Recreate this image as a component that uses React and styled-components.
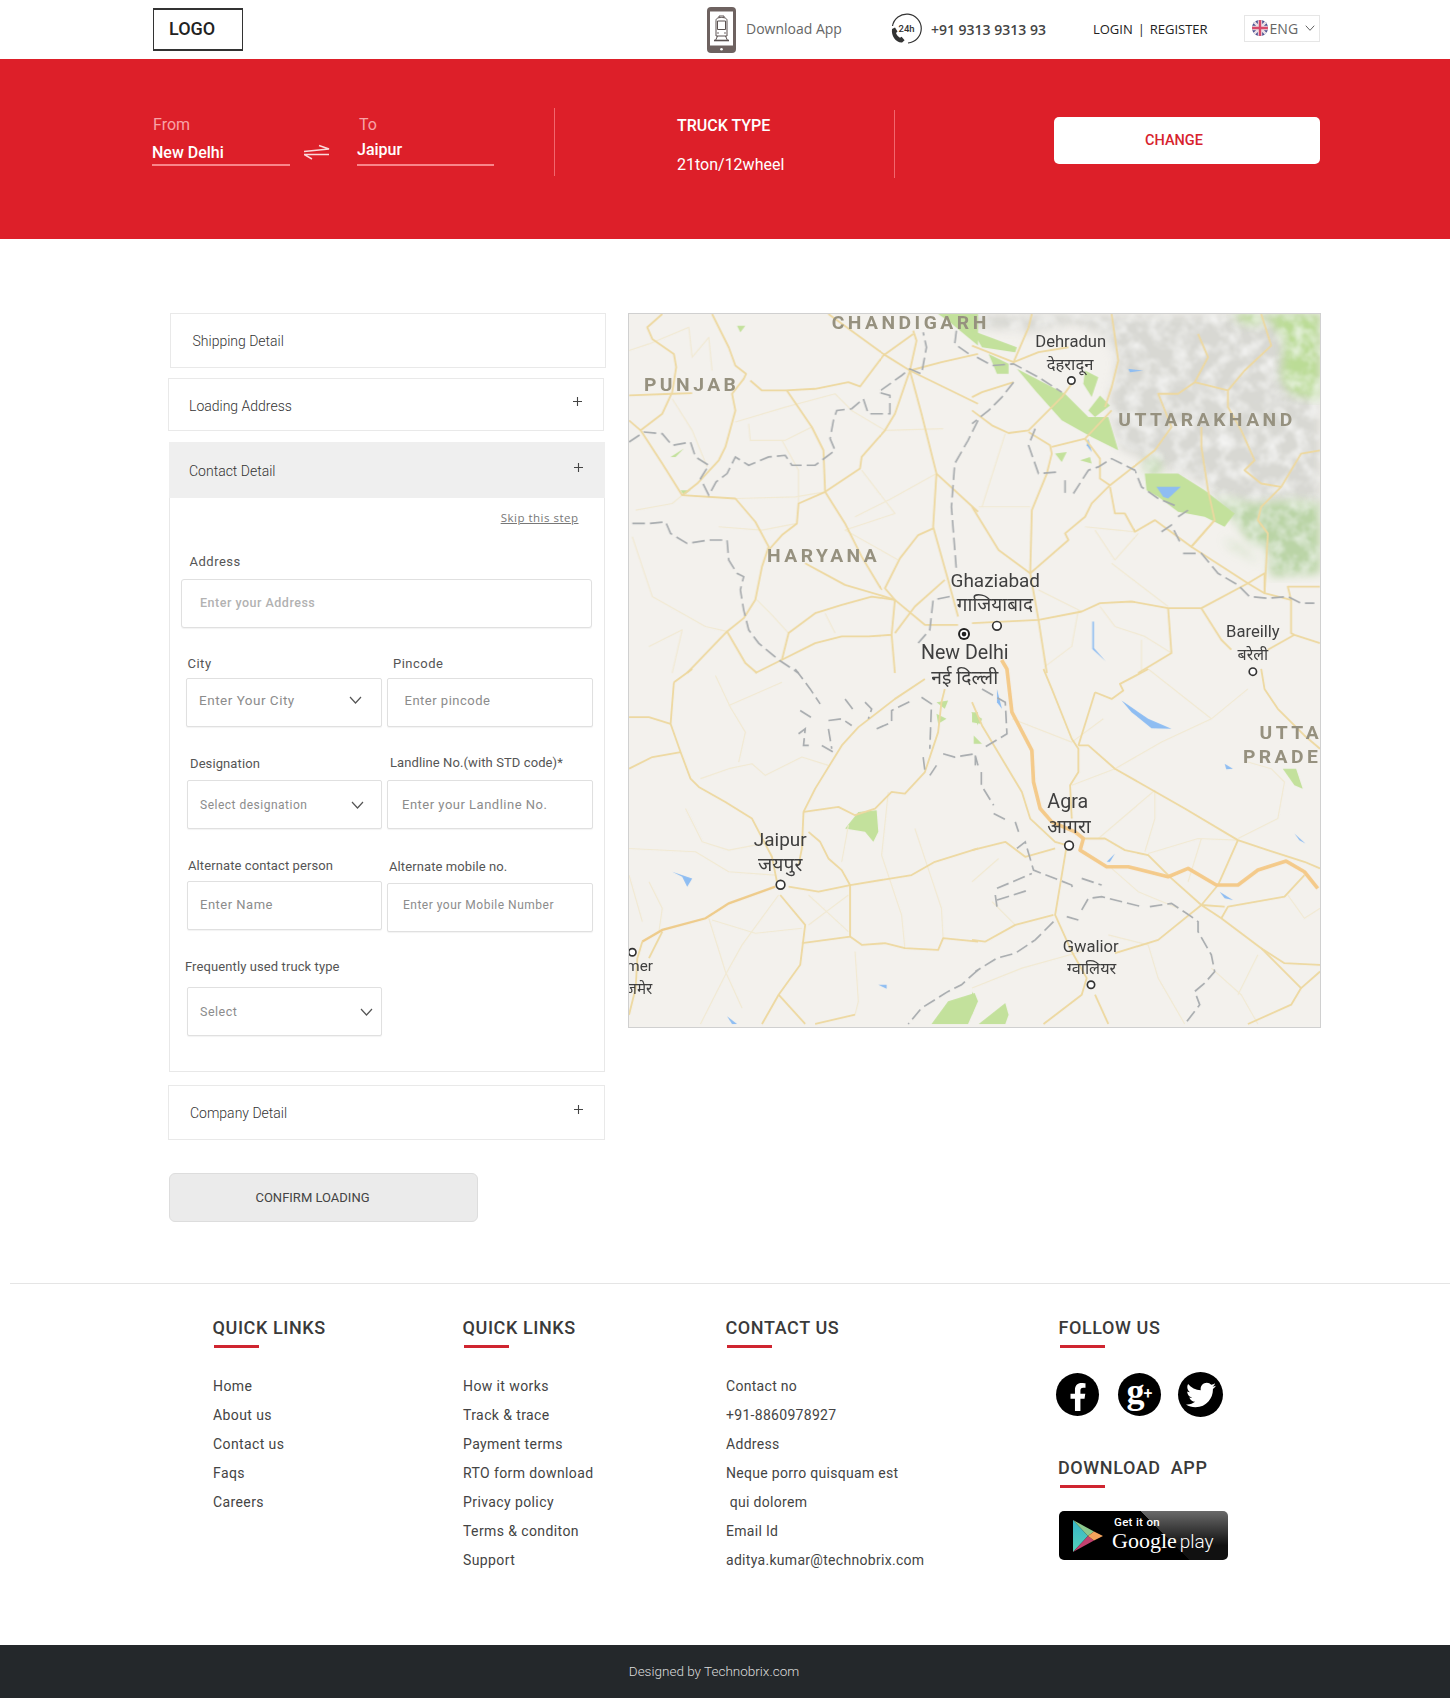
import { createGlobalStyle, styled } from "styled-components";
import { FaFacebookF, FaTwitter } from "react-icons/fa";

const GlobalStyle = createGlobalStyle`
  html, body {
    margin: 0;
    padding: 0;
    background: #fff;
    font-family: Roboto, "Liberation Sans", sans-serif;
    color: #444;
  }
  * { box-sizing: border-box; }
`;

/* map data is traced per quadrant, in 3x crop coordinates */
const quadrants = {
  nw: {
    at: [0, 0],
    main: [
      "M0 245 L130 240 L190 238",
      "M100 0 L55 40 L70 75 L135 120 L142 160 L130 235 L100 300 L35 350 L0 320",
      "M250 0 L300 100 L320 155 L352 180 L345 195 L310 240 L320 290 L290 400 L270 440 L205 510 L160 545",
      "M35 350 L100 450 L160 545 L320 555 L380 625 L420 700 L400 760 L380 860 L345 915 L295 955 L175 1080",
      "M365 200 L400 230 L470 230 L560 225 L660 205 L695 218 L765 125 L855 60",
      "M600 0 L765 120 L845 170 L1050 270",
      "M855 50 L865 80 L845 170 L800 300 L770 350 L700 430 L695 465 L590 535 L510 570 L505 630 L460 665 L420 710",
      "M475 230 L550 340 L585 410 L590 535 L650 630 L700 730 L760 830",
      "M845 170 L880 300 L925 480 L915 640 L960 800 L990 910",
      "M925 480 L1050 595",
      "M915 645 L870 665 L815 735 L770 825 L800 860 L730 850 L640 875 L560 900 L480 960 L460 1040 L380 1080",
      "M530 750 L650 815 L770 850 L800 860 L890 935 L990 935",
      "M460 1040 L560 990 L640 970 L720 970 L790 965 L800 860",
      "M790 965 L800 1080",
      "M800 960 L860 880 L950 800",
      "M295 955 L350 1050 L385 1080",
      "M845 170 L940 145 L1050 120",
    ],
    minor: [
      "M0 110 L60 90 L180 40 L190 130 L240 70 L250 170",
      "M320 325 L470 280 L620 240 L670 290 L770 350 L945 345",
      "M360 330 L365 380 L470 380 L550 340",
      "M460 380 L510 470 L510 570",
      "M130 255 L190 350 L235 460",
      "M20 590 L130 570 L160 545",
      "M320 555 L500 550 L590 535",
      "M270 640 L400 650 L505 630",
      "M680 610 L780 560 L925 480",
      "M700 470 L800 600 L650 650 L810 740",
      "M10 670 L70 850 L230 940 L295 955",
      "M385 860 L430 905 L480 960",
      "M590 900 L620 960",
      "M60 1000 L160 950 L130 1080",
    ],
    border: [
      "M0 385 L45 355 L100 360 L130 395 L185 385 L200 430 L240 455 L215 495 L240 545 L262 505 L295 480 L320 430 L360 455 L420 430 L470 425 L490 455 L560 455 L620 410 L605 375 L615 320 L625 290 L670 285 L705 255 L720 300 L785 300 L785 245 L750 235 L820 185 L845 165 L880 180 L895 100 L885 55",
      "M10 630 L60 630 L110 625 L125 660 L175 690 L240 680 L295 680 L300 740 L325 780 L345 790 L335 830 L345 890 L360 950 L390 990 L450 1040 L510 1080",
      "M1050 320 L1020 380 L980 450 L970 580 L985 770",
      "M985 50 L980 90 L1030 125",
      "M965 850 L915 860 L905 950 L870 990",
    ],
    green: [
      "M325 35 L350 35 L335 55Z",
      "M125 430 L165 405 L140 430Z",
      "M155 530 L185 530 L165 545Z",
      "M930 0 L1050 0 L1050 95 L1020 70 L960 20Z",
    ],
    water: [],
  },
  ne: {
    at: [1032, 0],
    main: [
      "M0 95 L125 145 L170 40 L180 0",
      "M0 290 L60 335 L110 358 L170 350 L270 250 L300 210",
      "M125 145 L200 115 L290 100",
      "M0 250 L30 235 L125 205",
      "M170 355 L235 395 L240 420 L225 480 L180 590 L175 780 L200 920 L225 1080",
      "M240 400 L340 375 L420 290",
      "M340 375 L385 435 L385 495 L415 515 L360 570 L340 610 L280 660 L290 680 L175 780 L80 710 L0 580",
      "M415 520 L430 600 L460 600 L490 655 L550 620 L660 700 L730 620 L710 530 L690 400 L690 340",
      "M415 515 L550 410 L600 340 L560 240 L620 240 L670 205 L710 130 L680 60",
      "M670 205 L770 230 L770 280 L810 350 L850 440 L820 470 L870 510 L930 520 L960 470 L990 420 L1047 410",
      "M770 230 L820 170 L900 95 L870 0",
      "M730 620 L660 700 L830 810 L880 840 L890 660 L860 620 L870 580 L930 520",
      "M830 810 L880 780 L880 840 L960 860 L950 820 L1047 820",
      "M0 930 L200 920 L330 895 L385 870 L480 865 L590 885 L690 885 L830 810",
      "M960 860 L960 960 L970 965 L1047 990",
      "M690 885 L750 980 L780 1010",
      "M970 965 L890 1010",
      "M590 885 L600 1020 L500 1080",
      "M420 0 L440 140 L420 220 L400 280",
    ],
    minor: [
      "M340 640 L440 650 L490 655",
      "M370 650 L430 740 L500 660",
      "M420 750 L590 880",
      "M200 830 L330 895",
      "M385 880 L430 940 L520 970 L600 1020",
      "M20 580 L175 580",
      "M100 360 L30 580",
      "M320 890 L300 1000 L220 1060",
      "M510 980 L510 1080",
    ],
    border: [
      "M15 130 L60 155 L125 150 L200 190 L270 235",
      "M125 205 L90 250 L50 290 L0 330",
      "M190 345 L170 395 L200 480 L260 475",
      "M280 500 L280 545",
      "M305 540 L350 470 L380 460 L420 435 L490 470 L510 520 L560 555 L620 580",
      "M620 610 L650 590",
      "M570 655 L600 635 L630 695",
      "M635 720 L690 720 L740 780 L800 815 L835 850 L890 855 L950 850 L990 870 L1030 870",
    ],
    green: [
      "M135 165 L280 240 L350 310 L410 310 L440 410 L360 370 L270 320 L190 230Z",
      "M0 50 L135 100 L130 115 L30 100Z",
      "M50 120 L110 150 L110 180 L75 180Z",
      "M340 170 L380 190 L360 250 L335 210Z",
      "M350 290 L385 245 L415 275 L370 310Z",
      "M520 480 L620 480 L700 530 L790 600 L760 640 L700 610 L620 595 L560 550 L525 530Z",
      "M250 420 L285 415 L270 445Z",
      "M325 440 L355 430 L360 450Z",
    ],
    meadow: [
      "M880 0 L1047 0 L1047 260 L960 240 L930 190 L940 80Z",
      "M780 0 L870 0 L870 30 L820 30Z",
    ],
    forest: [
      "M730 550 L850 570 L960 560 L1047 570 L1047 780 L900 790 L890 700 L840 690 L790 620Z",
      "M760 675 L860 740 L860 745 L780 700Z",
      "M520 440 L560 430 L570 480 L520 480Z",
    ],
    terrain: [
      "M150 0 L1047 0 L1047 570 L960 560 L850 570 L730 550 L700 510 L620 480 L520 440 L440 400 L420 300 L415 250 L440 140 L400 60 L300 30 L150 60Z",
      "M0 0 L150 0 L130 50 L0 40Z",
    ],
    water: [
      "M470 165 L515 170 L475 175Z",
      "M350 375 L360 415 L345 395Z",
      "M555 520 L628 520 L590 555 L575 550Z",
      "M362 925 L367 925 L367 1005 L402 1045 L362 1008Z",
    ],
  },
  sw: {
    at: [0, 1068],
    main: [
      "M135 40 L125 165 L155 250 L185 330 L210 355 L290 400 L370 450 L430 565 L445 640",
      "M0 145 L60 145 L125 165",
      "M0 300 L70 265 L155 250",
      "M135 40 L190 0",
      "M890 30 L800 90 L690 175 L640 230 L560 360 L525 430 L520 540 L510 590",
      "M40 820 L25 870 L20 960 L0 1040",
      "M100 790 L60 870",
      "M525 430 L630 415 L680 440 L740 420 L790 370 L830 375 L890 310 L930 190 L940 100 L950 60",
      "M540 490 L575 520 L600 570 L640 605 L665 650 L665 805 L520 825",
      "M480 655 L570 670 L665 650 L850 620 L920 580 L1050 540",
      "M455 680 L530 770 L515 890 L450 980 L400 1068",
      "M450 980 L530 1068",
      "M665 805 L700 830 L770 825 L830 840 L930 845 L945 810 L1050 820",
      "M560 1068 L680 1040",
    ],
    minor: [
      "M215 330 L300 300 L370 285 L410 320 L520 265 L600 290",
      "M260 20 L305 115 L350 190 L330 280",
      "M300 110 L460 40",
      "M170 420 L220 520 L300 545 L430 520",
      "M0 540 L200 550 L300 610 L440 620",
      "M60 640 L100 720 L90 790",
      "M240 750 L290 910 L340 1020",
      "M250 755 L380 795 L520 780",
      "M450 680 L340 830 L290 920 L215 1068",
      "M680 850 L690 1000 L680 1040",
      "M660 470 L640 580",
      "M860 480 L900 600 L940 720 L945 810",
      "M780 370 L760 560 L820 740 L830 840",
      "M0 620 L40 760",
      "M540 680 L660 790",
      "M660 680 L540 770",
    ],
    border: [
      "M500 0 L545 60 L575 105",
      "M515 125 L555 150",
      "M600 155 L640 150 L670 170",
      "M650 90 L680 130",
      "M710 100 L730 120 L720 150",
      "M510 195 L530 180 L525 230 L555 230",
      "M600 180 L610 240",
      "M580 230 L615 250",
      "M745 180 L790 160 L790 125 L850 95",
      "M880 85 L910 105 L905 240",
      "M885 265 L890 305",
      "M905 320 L925 290",
      "M945 255 L980 265 L1040 255 L1050 290",
      "M1050 905 L1000 950 L960 970 L880 1020 L840 1068",
    ],
    green: [
      "M650 480 L690 430 L745 425 L750 490 L735 520 L710 490Z",
      "M925 100 L960 95 L950 120Z",
      "M925 135 L955 150 L930 165Z",
      "M1030 130 L1050 130 L1050 170Z",
      "M910 1068 L960 1000 L1040 975 L1050 1000 L1020 1068Z",
    ],
    water: [
      "M130 610 L190 630 L175 655 L160 625Z",
      "M750 950 L775 950 L775 962Z",
      "M295 1045 L325 1068 L310 1068Z",
    ],
  },
  se: {
    at: [1032, 1068],
    main: [
      "M0 100 L30 170 L90 270 L150 370 L175 450 L250 520 L285 530 L250 740 L300 850",
      "M215 0 L240 60 L300 210 L320 240 L320 310 L295 350 L300 450",
      "M370 70 L320 230",
      "M370 70 L420 90 L455 65 L445 45 L530 0",
      "M320 230 L350 230 L430 300 L640 420 L800 515 L890 545 L1000 580 L1047 600",
      "M0 545 L100 520 L160 565 L250 540",
      "M340 510 L400 510 L460 545 L530 560 L600 630 L690 710 L750 750 L870 840 L990 960 L1047 910",
      "M690 710 L740 650 L800 515",
      "M750 750 L770 715 L940 685 L1000 620",
      "M690 710 L760 715",
      "M245 740 L130 770 L40 820 L0 815",
      "M430 855 L560 815 L690 710",
      "M300 850 L345 930 L330 980 L215 1068",
      "M370 980 L410 1068",
      "M990 960 L960 1010 L830 1068",
      "M870 840 L940 885 L1047 890",
      "M870 0 L880 60 L920 120 L1000 200 L1047 240",
    ],
    minor: [
      "M530 0 L720 150 L830 60",
      "M720 150 L570 220 L430 300 L300 350",
      "M120 150 L300 220 L395 150",
      "M380 510 L550 365 L550 450 L520 550",
      "M530 555 L680 510 L800 515",
      "M690 510 L650 640",
      "M800 510 L920 450 L940 340 L900 300 L830 280",
      "M0 640 L80 570",
      "M60 700 L130 770",
      "M410 800 L530 830 L560 930 L640 1068",
      "M800 980 L860 860",
      "M720 900 L810 980 L860 1068",
      "M950 680 L1000 750 L1047 720",
      "M0 960 L150 900 L330 850",
      "M420 600 L500 670 L620 720",
    ],
    border: [
      "M30 60 L100 100 L105 195 L30 240",
      "M10 260 L10 290",
      "M28 310 L28 350 L65 410",
      "M65 435 L105 455",
      "M130 460 L140 490",
      "M135 540 L160 520 L185 605 L300 650 L305 670",
      "M75 660 L180 615",
      "M75 695 L170 665",
      "M70 680 L75 715",
      "M330 630 L390 650",
      "M330 725 L350 690 L390 685 L510 715",
      "M535 715 L600 705 L660 745 L680 760 L680 790 L720 860 L730 910 L700 945 L670 970 L685 1010 L640 1068",
      "M285 745 L320 755",
      "M245 760 L190 815 L130 855 L75 870 L10 910",
    ],
    green: [
      "M0 130 L30 150 L25 165 L0 160Z",
      "M5 200 L30 225 L5 225Z",
      "M0 970 L15 1000 L0 1040Z",
      "M20 1068 L100 1005 L110 1040 L100 1068Z",
      "M935 300 L975 300 L995 360 L970 350Z",
    ],
    water: [
      "M450 95 L530 150 L600 180 L540 178 L480 130Z",
      "M760 285 L785 300 L765 302Z",
      "M970 495 L1003 525 L985 515Z",
      "M745 670 L785 695 L760 690Z",
      "M405 580 L430 555 L415 580Z",
      "M75 60 L90 120 L75 100Z",
    ],
  },
};

const routePath =
  "M1121 1041 L1137 1068 L1152 1198 L1212 1313 L1217 1408 L1237 1488 L1272 1528 L1342 1558 L1367 1578 L1357 1613 L1437 1663 L1502 1663 L1622 1693 L1682 1668 L1767 1718 L1832 1718 L1892 1673 L1977 1646 L2032 1678 L2072 1728";
const jaipurHighway = "M40 1888 L100 1853 L230 1818 L300 1773 L440 1723";

const stateLabels = [
  ["PUNJAB", 45, 232],
  ["CHANDIGARH", 610, 45],
  ["HARYANA", 415, 746],
  ["UTTARAKHAND", 1472, 336],
  ["UTTA", 1897, 1278],
  ["PRADE", 1847, 1350],
];

const cityLabels = [
  ["Dehradun", 1329, 98, 50],
  ["देहरादून", 1327, 168, 50],
  ["Ghaziabad", 1102, 822, 57],
  ["गाजियाबाद", 1101, 895, 57],
  ["New Delhi", 1010, 1038, 59],
  ["नई दिल्ली", 1010, 1112, 58],
  ["Bareilly", 1877, 972, 50],
  ["बरेली", 1877, 1040, 48],
  ["Jaipur", 455, 1601, 57],
  ["जयपुर", 455, 1676, 58],
  ["Agra", 1320, 1486, 59],
  ["आगरा", 1324, 1562, 58],
  ["Gwalior", 1389, 1918, 50],
  ["ग्वालियर", 1392, 1985, 49],
];

const markers = [
  [1331, 200, 11],
  [1107, 938, 13],
  [1877, 1076, 11],
  [456, 1717, 13],
  [1324, 1599, 13],
  [1390, 2018, 11],
  [10, 1920, 11],
];

const MapPicture = () => (
  <MapSvg viewBox="0 0 2079 2145" preserveAspectRatio="none" role="img" aria-label="Map">
    <defs>
      <filter id="soft" x="-2%" y="-2%" width="104%" height="104%">
        <feGaussianBlur stdDeviation="1.5" />
      </filter>
      <filter id="terrain" x="-5%" y="-5%" width="110%" height="110%">
        <feGaussianBlur in="SourceGraphic" stdDeviation="14" result="base" />
        <feTurbulence type="fractalNoise" baseFrequency="0.022" numOctaves="5" seed="7" />
        <feColorMatrix values="0 0 0 0 1 0 0 0 0 1 0 0 0 0 1 1.5 0 0 0 -0.6" />
        <feGaussianBlur stdDeviation="2.5" />
        <feComposite in2="base" operator="in" result="noise" />
        <feMerge>
          <feMergeNode in="base" />
          <feMergeNode in="noise" />
        </feMerge>
      </filter>
    </defs>
    <rect width="2079" height="2145" fill="#f3f1ed" />
    <g filter="url(#terrain)">
      {quadrants.ne.terrain.map((d) => (
        <path key={d} d={d} transform="translate(1032 0)" fill="#d8d8d3" />
      ))}
    </g>
    <g filter="url(#terrain)">
      {quadrants.ne.forest.map((d) => (
        <path key={d} d={d} transform="translate(1032 0)" fill="#bad4a6" />
      ))}
    </g>
    <g filter="url(#terrain)">
      {quadrants.ne.meadow.map((d) => (
        <path key={d} d={d} transform="translate(1032 0)" fill="#bbdc96" />
      ))}
    </g>
    <g filter="url(#soft)">
      {Object.entries(quadrants).map(([name, q]) => (
        <g key={name} transform={`translate(${q.at[0]} ${q.at[1]})`}>
          {q.green.map((d) => (
            <path key={d} d={d} fill="#c3e19c" />
          ))}
          {q.water.map((d) => (
            <path key={d} d={d} fill="#8ebdf2" />
          ))}
          {q.minor.map((d) => (
            <path key={d} d={d} fill="none" stroke="#f1e9d2" strokeWidth="3.5" strokeLinejoin="round" />
          ))}
          {q.main.map((d) => (
            <path key={d} d={d} fill="none" stroke="#edd8a0" strokeWidth="5.5" strokeLinejoin="round" />
          ))}
          {q.border.map((d) => (
            <path key={d} d={d} fill="none" stroke="#a7abae" strokeWidth="5" strokeDasharray="38 15" />
          ))}
        </g>
      ))}
      <path d={jaipurHighway} fill="none" stroke="#eecb8a" strokeWidth="7" />
      <path d={routePath} fill="none" stroke="#f4ca8a" strokeWidth="11" strokeLinejoin="round" />
    </g>
    {stateLabels.map(([name, x, y]) => (
      <StateLabel key={name} x={x} y={y}>
        {name}
      </StateLabel>
    ))}
    {cityLabels.map(([name, x, y, size]) => (
      <CityLabel key={name} x={x} y={y} fontSize={size} textAnchor="middle">
        {name}
      </CityLabel>
    ))}
    <CityLabel x="72" y="1976" fontSize="46" textAnchor="end">
      Ajmer
    </CityLabel>
    <CityLabel x="70" y="2046" fontSize="46" textAnchor="end">
      अजमेर
    </CityLabel>
    {markers.map(([cx, cy, r]) => (
      <circle key={`${cx}-${cy}`} cx={cx} cy={cy} r={r} fill="#fff" stroke="#333" strokeWidth="5" />
    ))}
    <circle cx="1008" cy="963" r="18" fill="#222" />
    <circle cx="1008" cy="963" r="12" fill="#fff" />
    <circle cx="1008" cy="963" r="7" fill="#222" />
  </MapSvg>
);

const PhoneIcon = () => (
  <svg width="29" height="46" viewBox="0 0 29 46">
    <rect width="29" height="46" rx="4" fill="#6e6260" />
    <rect x="3" y="4.5" width="23" height="34" fill="#fff" />
    <circle cx="14.5" cy="42.3" r="1.3" fill="#fff" />
    <g fill="none" stroke="#5a5150" strokeWidth="1">
      <path d="M9 29V13.5c0-2 1.6-3 5.5-3s5.5 1 5.5 3V29z" />
      <path d="M10.5 14h8v8.5h-8z" />
      <path d="M12 10.5V9h5v1.5" />
      <path d="M7 33.5h15" strokeWidth="1.6" />
      <path d="M10.5 29l-2 4.5M18.5 29l2 4.5" />
    </g>
    <circle cx="11" cy="26" r=".8" fill="#5a5150" />
    <circle cx="18" cy="26" r=".8" fill="#5a5150" />
  </svg>
);

const HotlineIcon = () => (
  <svg width="34" height="33" viewBox="0 0 34 33">
    <path d="M3.5 13A14.5 14.5 0 1 1 19 30" fill="none" stroke="#333" strokeWidth="1.2" />
    <path
      d="M3 16l3-1.5 2.5 4-1.5 1.5c.8 2 2 3.5 4 4.8l1.6-1 3 3.5-2.5 2.2C7 30 2 23 3 16z"
      fill="#333"
    />
    <MiniText x="9.5" y="19" fontSize="9.5" fontWeight="500">
      24h
    </MiniText>
  </svg>
);

const FlagIcon = () => (
  <svg width="16" height="16" viewBox="0 0 16 16">
    <defs>
      <clipPath id="flagClip">
        <circle cx="8" cy="8" r="8" />
      </clipPath>
    </defs>
    <g clipPath="url(#flagClip)">
      <rect width="16" height="16" fill="#4a4f8f" />
      <path d="M0 0L16 16M16 0L0 16" stroke="#e9dfe6" strokeWidth="2.6" />
      <path d="M8 0V16M0 8H16" stroke="#e9dfe6" strokeWidth="4.4" />
      <path d="M8 0V16M0 8H16" stroke="#d8496a" strokeWidth="2.4" />
    </g>
  </svg>
);

const SwapIcon = () => (
  <svg width="26" height="16" viewBox="0 0 26 16" fill="none" stroke="#fbd9db" strokeWidth="1.5">
    <path d="M0 7.5L25 5L15 1.5" />
    <path d="M25 10.5H0L8 15" />
  </svg>
);

const Chevron = () => (
  <svg width="13" height="8" viewBox="0 0 13 8" fill="none" stroke="#555" strokeWidth="1.2">
    <path d="M1 1l5.5 6L12 1" />
  </svg>
);

const PlusIcon = () => (
  <svg width="11" height="11" viewBox="0 0 11 11" stroke="#444" strokeWidth="1.1">
    <path d="M5.5 1v9M1 5.5h9" />
  </svg>
);

const PlayLogo = () => (
  <svg width="32" height="34" viewBox="0 0 32 34">
    <path d="M1 1L16 17L1 33z" fill="url(#playBlue)" />
    <path d="M1 1L22 12.5L16 17z" fill="#8cc98d" />
    <path d="M1 33L22 21.5L16 17z" fill="#c2416f" />
    <path d="M22 12.5L31 17L22 21.5L16 17z" fill="#f3a35c" />
    <defs>
      <linearGradient id="playBlue" x1="0" y1="0" x2="0" y2="1">
        <stop offset="0" stopColor="#35b6c9" />
        <stop offset="1" stopColor="#55d0b8" />
      </linearGradient>
    </defs>
  </svg>
);

const FooterColumn = ({ width, title, items, tight }) => (
  <LinkColumn $width={width}>
    <FooterTitle>{title}</FooterTitle>
    <RedBar />
    <LinkList>
      {items.map((item, i) => (
        <LinkItem key={i} $tight={tight}>
          {item}
        </LinkItem>
      ))}
    </LinkList>
  </LinkColumn>
);

const App = () => {
  return (
    <Page>
      <GlobalStyle />
      <TopBar>
        <LogoBox>LOGO</LogoBox>
        <AppLink>
          <PhoneIcon />
          <span>Download App</span>
        </AppLink>
        <Hotline>
          <HotlineIcon />
          <span>+91 9313 9313 93</span>
        </Hotline>
        <AuthLinks>
          LOGIN
          <AuthDivider>|</AuthDivider>
          REGISTER
        </AuthLinks>
        <LangBox>
          <FlagIcon />
          <span>ENG</span>
          <Chevron />
        </LangBox>
      </TopBar>

      <Hero>
        <RouteField $width={138} $left={0} $gap={7}>
          <RouteLabel $indent={1}>From</RouteLabel>
          <RouteValue>New Delhi</RouteValue>
        </RouteField>
        <SwapHolder>
          <SwapIcon />
        </SwapHolder>
        <RouteField $width={137} $left={27} $gap={4}>
          <RouteLabel $indent={2}>To</RouteLabel>
          <RouteValue>Jaipur</RouteValue>
        </RouteField>
        <HeroDivider $left={60} $top={0} />
        <TruckInfo>
          <TruckTitle>TRUCK TYPE</TruckTitle>
          <TruckValue>21ton/12wheel</TruckValue>
        </TruckInfo>
        <HeroDivider $left={0} $top={2} />
        <ChangeButton>CHANGE</ChangeButton>
      </Hero>

      <Main>
        <LeftColumn>
          <Accordion $left={1.5} $width={436} $height={55} $top={0}>
            <AccordionTitle $indent={22} $drop={0}>Shipping Detail</AccordionTitle>
          </Accordion>
          <Accordion $left={0} $width={435.5} $height={53.5} $top={9.5}>
            <AccordionTitle $indent={20} $drop={4}>Loading Address</AccordionTitle>
            <PlusIcon />
          </Accordion>
          <ContactPanel>
            <Accordion $left={0} $width={435.5} $height={55.5} $top={0} $active>
              <AccordionTitle $indent={19} $drop={2}>Contact Detail</AccordionTitle>
              <PlusIcon />
            </Accordion>
            <FormBody>
              <SkipLine>
                <SkipLink>Skip this step</SkipLink>
              </SkipLine>
              <FormRow $top={25.5}>
                <Field $left={11} $width={411}>
                  <FieldLabel $indent={8.5} $gap={8} $wide>Address</FieldLabel>
                  <TextInput $radius={3} $pad={18} $size={12.5} $lift={2} $light placeholder="Enter your Address" />
                </Field>
              </FormRow>
              <FormRow $top={27}>
                <Field $left={16} $width={195.5}>
                  <FieldLabel $indent={1.5} $gap={5} $wide>City</FieldLabel>
                  <SelectBox $pad={12} $arrow={19} $size={13.5} $lift={5}>
                    <span>Enter Your City</span>
                    <Chevron />
                  </SelectBox>
                </Field>
                <Field $left={5} $width={206.5}>
                  <FieldLabel $indent={6.5} $gap={4.5} $wide>Pincode</FieldLabel>
                  <TextInput $pad={17} $lift={3} placeholder="Enter pincode" />
                </Field>
              </FormRow>
              <FormRow $top={27}>
                <Field $left={17} $width={195}>
                  <FieldLabel $indent={3} $gap={7} $raise={1}>Designation</FieldLabel>
                  <SelectBox $pad={12} $arrow={17} $size={12}>
                    <span>Select designation</span>
                    <Chevron />
                  </SelectBox>
                </Field>
                <Field $left={5} $width={206}>
                  <FieldLabel $indent={3} $gap={8}>Landline No.(with STD code)*</FieldLabel>
                  <TextInput $pad={14} placeholder="Enter your Landline No." />
                </Field>
              </FormRow>
              <FormRow $top={27}>
                <Field $left={17} $width={195}>
                  <FieldLabel $indent={1} $gap={6.5} $raise={0.5}>Alternate contact person</FieldLabel>
                  <TextInput $pad={12} $lift={3} placeholder="Enter Name" />
                </Field>
                <Field $left={5} $width={206}>
                  <FieldLabel $indent={2} $gap={7.5} $raise={1.5}>Alternate mobile no.</FieldLabel>
                  <TextInput $pad={15} $size={12} $lift={6} placeholder="Enter your Mobile Number" />
                </Field>
              </FormRow>
              <FormRow $top={25.5}>
                <Field $left={17} $width={195}>
                  <FieldLabel $indent={-2} $gap={11.5}>Frequently used truck type</FieldLabel>
                  <SelectBox $pad={12} $arrow={8} $size={12.5}>
                    <span>Select</span>
                    <Chevron />
                  </SelectBox>
                </Field>
              </FormRow>
            </FormBody>
          </ContactPanel>
          <Accordion $left={0} $width={436.5} $height={54.5} $top={13}>
            <AccordionTitle $indent={21} $drop={2}>Company Detail</AccordionTitle>
            <PlusIcon />
          </Accordion>
          <ConfirmButton>CONFIRM LOADING</ConfirmButton>
        </LeftColumn>
        <MapFrame>
          <MapPicture />
        </MapFrame>
      </Main>

      <Footer>
        <FooterColumn
          width={250}
          title="QUICK LINKS"
          items={["Home", "About us", "Contact us", "Faqs", "Careers"]}
        />
        <FooterColumn
          width={263}
          title="QUICK LINKS"
          items={[
            "How it works",
            "Track & trace",
            "Payment terms",
            "RTO form download",
            "Privacy policy",
            "Terms & conditon",
            "Support",
          ]}
        />
        <FooterColumn
          width={333}
          tight
          title="CONTACT US"
          items={[
            "Contact no",
            "+91-8860978927",
            "Address",
            "Neque porro quisquam est",
            "\u00a0qui dolorem",
            "Email Id",
            "aditya.kumar@technobrix.com",
          ]}
        />
        <FollowColumn>
          <FooterTitle>FOLLOW US</FooterTitle>
          <RedBar />
          <SocialRow>
            <SocialIcon $size={43}>
              <FacebookGlyph size={28} />
            </SocialIcon>
            <SocialIcon $size={43} $left={19}>
              <GooglePlusMark>
                g<sup>+</sup>
              </GooglePlusMark>
            </SocialIcon>
            <SocialIcon $size={45} $left={17}>
              <FaTwitter size={30} />
            </SocialIcon>
          </SocialRow>
          <FooterTitle $top={39} $left={-1}>DOWNLOAD &nbsp;APP</FooterTitle>
          <RedBar />
          <StoreBadge>
            <PlayLogo />
            <BadgeText>
              <BadgeSmall>Get it on</BadgeSmall>
              <BadgeBig>
                <GoogleWord>Google</GoogleWord>
                <PlayWord>play</PlayWord>
              </BadgeBig>
            </BadgeText>
          </StoreBadge>
        </FollowColumn>
      </Footer>

      <Copyright>Designed by Technobrix.com</Copyright>
    </Page>
  );
};

const Page = styled.div`
  width: 1450px;
  min-height: 1698px;
  overflow: hidden;
`;

const TopBar = styled.header`
  height: 59px;
  display: flex;
  align-items: center;
  padding-left: 153px;
`;

const LogoBox = styled.div`
  width: 90px;
  height: 43px;
  padding: 0 0 2px 15px;
  display: flex;
  align-items: center;
  border: 1px solid #333;
  border-top-width: 2px;
  border-bottom-width: 2px;
  font-size: 18px;
  font-weight: 500;
  color: #222;
`;

const AppLink = styled.div`
  margin-left: 464px;
  display: flex;
  align-items: center;
  gap: 10px;
  font-family: "Open Sans", sans-serif;
  font-size: 14px;
  color: #666;

  span {
    margin-top: -3px;
  }
`;

const Hotline = styled.div`
  margin-left: 47px;
  display: flex;
  align-items: center;
  gap: 8px;
  font-family: "Open Sans", sans-serif;
  font-size: 14px;
  font-weight: 600;
  color: #444;
`;

const AuthLinks = styled.div`
  margin: -2px 0 0 47px;
  display: flex;
  align-items: center;
  font-family: "Open Sans", sans-serif;
  font-size: 13px;
  color: #222;
`;

const AuthDivider = styled.span`
  width: 17px;
  text-align: center;
`;

const LangBox = styled.div`
  margin: -3px 0 0 36px;
  width: 76px;
  height: 27px;
  padding-left: 7px;
  display: flex;
  align-items: center;
  gap: 2px;
  border: 1px solid #e6e6e6;
  font-family: "Open Sans", sans-serif;
  font-size: 14px;
  color: #666;

  svg {
    flex-shrink: 0;
  }

  svg:last-child {
    margin-left: 5px;
    width: 10px;
  }
`;

const Hero = styled.section`
  height: 180px;
  padding: 49px 0 0 152px;
  display: flex;
  align-items: flex-start;
  background: #dd1f29;
  color: #fff;
`;

const RouteField = styled.div`
  width: ${(p) => p.$width}px;
  height: 51px;
  margin: 7px 0 0 ${(p) => p.$left}px;
  border-bottom: 2px solid #f9858a;

  div:last-child {
    margin-top: ${(p) => p.$gap}px;
  }
`;

const RouteLabel = styled.div`
  padding-left: ${(p) => p.$indent}px;
  font-size: 16px;
  line-height: 20px;
  color: #f8a3a7;
`;

const RouteValue = styled.div`
  font-size: 16px;
  font-weight: 500;
  line-height: 22px;
`;

const SwapHolder = styled.div`
  width: 26px;
  margin: 36px 0 0 14px;
`;

const HeroDivider = styled.div`
  width: 1px;
  height: 68px;
  margin: ${(p) => p.$top}px 0 0 ${(p) => p.$left}px;
  background: #f2666d;
`;

const TruckInfo = styled.div`
  width: 339px;
  padding: 8px 0 0 122px;
`;

const TruckTitle = styled.div`
  font-size: 16px;
  font-weight: 500;
  line-height: 20px;
`;

const TruckValue = styled.div`
  margin-top: 18px;
  font-size: 16px;
  line-height: 22px;
`;

const ChangeButton = styled.button`
  width: 266px;
  height: 47px;
  margin: 9px 0 0 159px;
  padding: 0 26px 0 0;
  border: 0;
  border-radius: 5px;
  background: #fff;
  color: #d7222d;
  font-family: Roboto, sans-serif;
  font-size: 14.5px;
  font-weight: 500;
`;

const Main = styled.main`
  display: flex;
  align-items: flex-start;
  padding: 74px 0 0 168px;
`;

const LeftColumn = styled.div`
  width: 438px;
  display: flex;
  flex-direction: column;
  align-items: flex-start;
`;

const Accordion = styled.div`
  width: ${(p) => p.$width}px;
  height: ${(p) => p.$height}px;
  margin: ${(p) => p.$top}px 0 0 ${(p) => p.$left}px;
  padding-right: 20px;
  display: flex;
  align-items: center;
  justify-content: space-between;
  border: 1px solid ${(p) => (p.$active ? "#efefef" : "#e9e9e9")};
  background: ${(p) => (p.$active ? "#efefef" : "#fff")};

  svg {
    margin-top: -5px;
  }
`;

const AccordionTitle = styled.div`
  padding: ${(p) => p.$drop}px 0 0 ${(p) => p.$indent}px;
  font-weight: 300;
  font-size: 14px;
  color: #333;
`;

const ContactPanel = styled.div`
  width: 435.5px;
  margin: 11px 0 0 1px;
`;

const FormBody = styled.div`
  padding: 10px 0 35px;
  border: 1px solid #e8e8e8;
  border-top: 0;
`;

const SkipLine = styled.div`
  height: 20px;
  padding-right: 25px;
  display: flex;
  align-items: center;
  justify-content: flex-end;
`;

const SkipLink = styled.a`
  font-family: "Open Sans", sans-serif;
  font-size: 11.5px;
  letter-spacing: 0.5px;
  color: #777;
  text-decoration: underline;
`;

const FormRow = styled.div`
  margin-top: ${(p) => p.$top}px;
  display: flex;
  align-items: flex-start;
`;

const Field = styled.div`
  width: ${(p) => p.$width}px;
  margin-left: ${(p) => p.$left}px;
  flex-shrink: 0;
`;

const FieldLabel = styled.div`
  padding-left: ${(p) => Math.max(p.$indent, 0)}px;
  margin: ${(p) => p.$raise || 0}px 0 ${(p) => p.$gap}px ${(p) => Math.min(p.$indent, 0)}px;
  font-size: 13px;
  line-height: 18px;
  letter-spacing: ${(p) => (p.$wide ? 0.5 : 0.1)}px;
  color: #555;
  white-space: nowrap;
`;

const controlBox = `
  width: 100%;
  height: 49px;
  background: #fff;
  border: 1px solid #e0e0e0;
  box-shadow: 0 1px 1px rgba(0, 0, 0, 0.05);
  font-family: Roboto, sans-serif;
  letter-spacing: 0.5px;
`;

const TextInput = styled.input`
  ${controlBox}
  display: block;
  padding: 0 0 ${(p) => p.$lift || 0}px ${(p) => p.$pad}px;
  border-radius: ${(p) => p.$radius || 2}px;
  font-size: ${(p) => p.$size || 13}px;
  outline: none;

  &::placeholder {
    color: ${(p) => (p.$light ? "#b2b2b2" : "#8c8c8c")};
    opacity: 1;
    font-weight: ${(p) => (p.$light ? 500 : 400)};
  }
`;

const SelectBox = styled.div`
  ${controlBox}
  padding: 0 ${(p) => p.$arrow}px ${(p) => p.$lift || 0}px ${(p) => p.$pad}px;
  display: flex;
  align-items: center;
  justify-content: space-between;
  border-radius: 2px;
  font-size: ${(p) => p.$size}px;
  color: #8c8c8c;
`;

const ConfirmButton = styled.button`
  width: 309px;
  height: 49px;
  margin: 33px 0 0 1px;
  padding: 0 22px 0 0;
  border: 1px solid #ddd;
  border-radius: 6px;
  background: #ebebeb;
  color: #444;
  font-family: Roboto, sans-serif;
  font-size: 13px;
`;

const MapFrame = styled.div`
  width: 693px;
  height: 715px;
  margin-left: 22px;
  border: 1px solid #d0d0d0;
  overflow: hidden;
`;

const MapSvg = styled.svg`
  display: block;
  width: 100%;
  height: 100%;
  font-family: Roboto, "Noto Sans", sans-serif;
`;

const StateLabel = styled.text`
  font-size: 58px;
  font-weight: 700;
  letter-spacing: 10.5px;
  fill: #96917f;
`;

const CityLabel = styled.text`
  fill: #3f3f3f;
`;

const MiniText = styled.text`
  font-family: Roboto, sans-serif;
  fill: #333;
`;

const Footer = styled.footer`
  height: 362px;
  margin: 61.5px 0 0 10px;
  padding: 32px 0 0 203px;
  display: flex;
  align-items: flex-start;
  border-top: 1px solid #e5e5e5;
`;

const LinkColumn = styled.div`
  width: ${(p) => p.$width}px;
`;

const FollowColumn = styled.div`
  width: 200px;
`;

const FooterTitle = styled.h4`
  margin: ${(p) => p.$top || 0}px 0 0 ${(p) => p.$left || -0.5}px;
  font-size: 18px;
  font-weight: 500;
  line-height: 24px;
  letter-spacing: 0.6px;
  color: #3a3a3a;
`;

const RedBar = styled.div`
  width: 45px;
  height: 3px;
  margin: 5px 0 0 1px;
  background: #cf2530;
`;

const LinkList = styled.ul`
  margin: 24px 0 0;
  padding: 0;
  list-style: none;
`;

const LinkItem = styled.li`
  font-size: 14px;
  line-height: 29px;
  letter-spacing: ${(p) => (p.$tight ? 0.3 : 0.4)}px;
  color: #444;
`;

const SocialRow = styled.div`
  margin: 24px 0 0 -3px;
  display: flex;
  align-items: center;
`;

const SocialIcon = styled.div`
  width: ${(p) => p.$size}px;
  height: ${(p) => p.$size}px;
  margin-left: ${(p) => p.$left || 0}px;
  display: flex;
  align-items: center;
  justify-content: center;
  border-radius: 50%;
  background: #000;
  color: #fff;
  overflow: hidden;
`;

const FacebookGlyph = styled(FaFacebookF)`
  margin-top: 4px;
`;

const GooglePlusMark = styled.span`
  margin-top: -7px;
  font-family: "Liberation Serif", serif;
  font-size: 36px;
  font-weight: 700;
  line-height: 1;

  sup {
    margin-left: -1px;
    font-family: Roboto, sans-serif;
    font-size: 16px;
    font-weight: 500;
    vertical-align: 4px;
    line-height: 0;
  }
`;

const StoreBadge = styled.div`
  width: 169px;
  height: 49px;
  margin-top: 23px;
  padding-left: 13px;
  display: flex;
  align-items: center;
  gap: 8px;
  border-radius: 5px;
  background: linear-gradient(45deg, #000 60%, transparent 60%),
    linear-gradient(180deg, #6a6a6a, #111 70%);
  color: #fff;
`;

const BadgeText = styled.div`
  display: flex;
  flex-direction: column;
`;

const BadgeSmall = styled.div`
  padding-left: 2px;
  font-size: 11.5px;
  font-weight: 500;
  line-height: 12px;
  letter-spacing: 0.3px;
`;

const BadgeBig = styled.div`
  display: flex;
  align-items: baseline;
  gap: 3px;
  line-height: 26px;
  white-space: nowrap;
`;

const GoogleWord = styled.span`
  font-family: "Liberation Serif", serif;
  font-size: 22px;
`;

const PlayWord = styled.span`
  font-size: 19px;
  font-weight: 300;
`;

const Copyright = styled.div`
  height: 53px;
  padding: 0 22px 1px 0;
  display: flex;
  align-items: center;
  justify-content: center;
  background: #24282b;
  color: #dcdcdc;
  font-size: 13.5px;
  font-weight: 300;
`;

export default App;
